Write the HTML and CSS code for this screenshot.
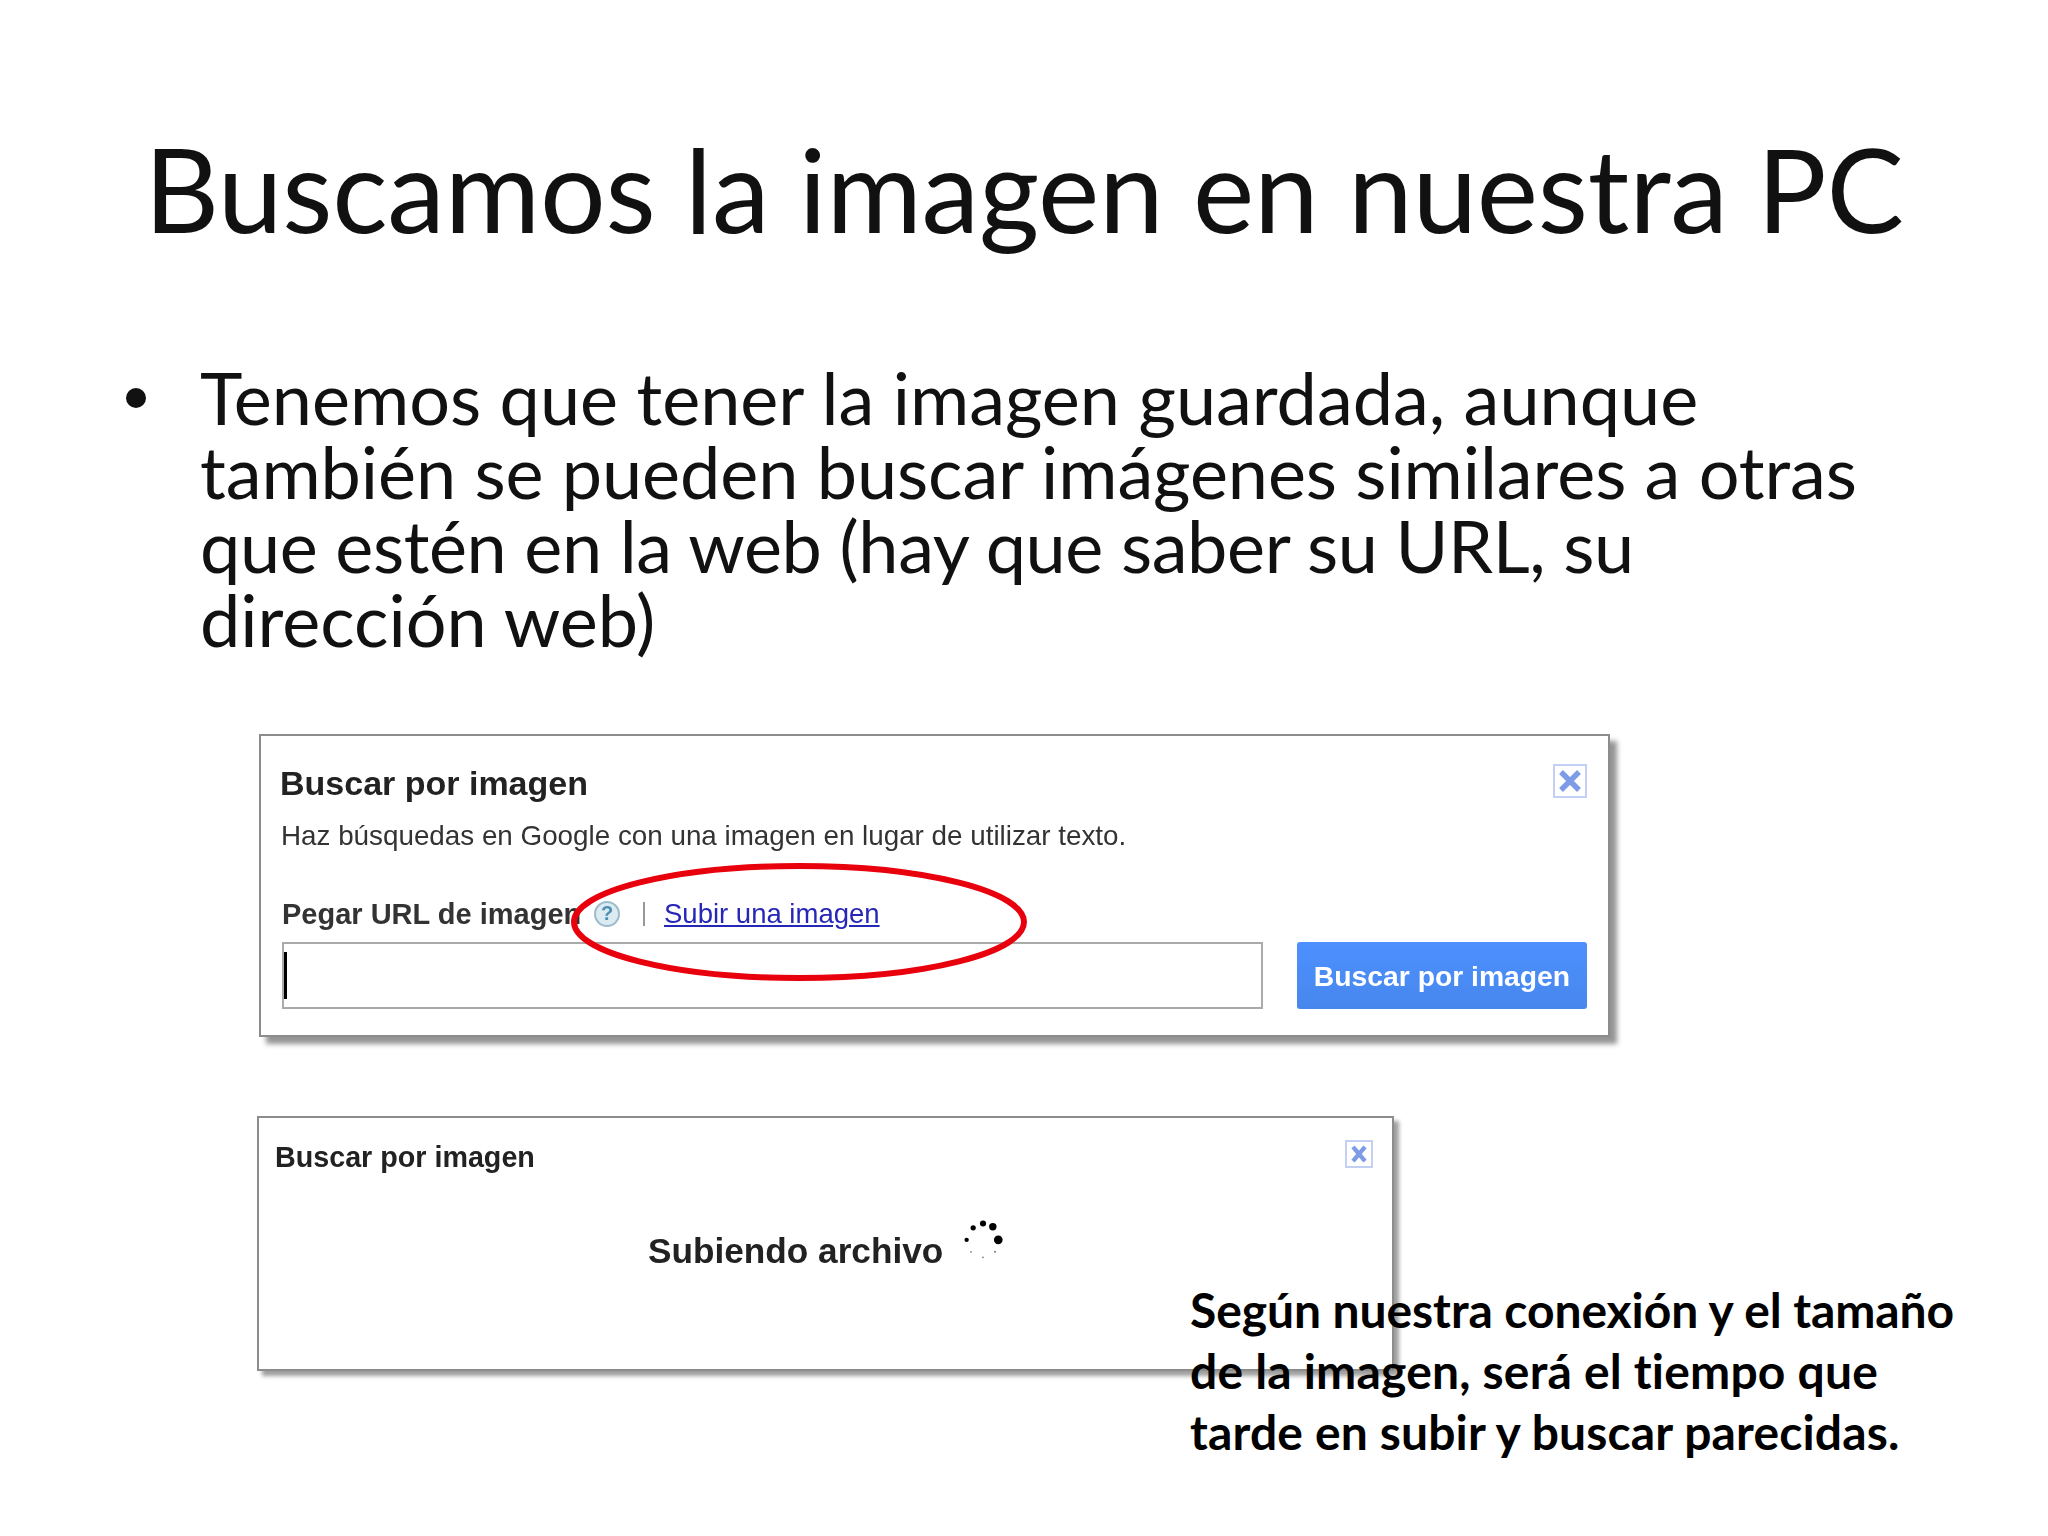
FILE: index.html
```html
<!DOCTYPE html>
<html lang="es">
<head>
<meta charset="utf-8">
<title>Buscamos la imagen en nuestra PC</title>
<link rel="stylesheet" href="styles.css">
</head>
<body>
<main class="slide">
  <h1 class="title">Buscamos la imagen en nuestra PC</h1>
  <ul class="bullets">
    <li class="bullet"><span class="line">Tenemos que tener la imagen guardada, aunque</span><span class="line line-b">también se pueden buscar imágenes similares a otras</span><span class="line line-c">que estén en la web (hay que saber su URL, su</span><span class="line">dirección web)</span></li>
  </ul>
  <section class="dialog dialog-search">
    <header class="dialog-head">
      <h2 class="dialog-title">Buscar por imagen</h2>
      <span class="close close-lg"><svg viewBox="0 0 20 20" class="close-x"><path d="M4 4 16 16M16 4 4 16"/></svg></span>
    </header>
    <p class="dialog-sub">Haz búsquedas en Google con una imagen en lugar de utilizar texto.</p>
    <div class="url-row">
      <span class="url-label">Pegar URL de imagen</span>
      <svg class="help" viewBox="0 0 28 28"><circle cx="14" cy="14" r="12" class="help-ring"/><text x="14" y="20" class="help-mark">?</text></svg>
      <span class="sep"></span>
      <a class="upload-link">Subir una imagen</a>
    </div>
    <div class="search-row">
      <div class="url-input"><span class="caret"></span></div>
      <button class="search-btn">Buscar por imagen</button>
    </div>
    <svg class="oval" viewBox="0 0 456 118"><ellipse cx="228" cy="59" rx="225" ry="56"/></svg>
  </section>
  <section class="dialog dialog-upload">
    <header class="dialog-head">
      <h2 class="dialog-title-sm">Buscar por imagen</h2>
      <span class="close close-sm"><svg viewBox="0 0 20 20" class="close-x"><path d="M5 4 15 16M15 4 5 16"/></svg></span>
    </header>
    <div class="upload-status">
      <span class="upload-text">Subiendo archivo</span>
      <svg class="spinner" viewBox="0 0 44 44">
        <circle cx="22" cy="5" r="2.8"/><circle cx="31" cy="8" r="3.4"/><circle cx="36" cy="20" r="4"/>
        <circle cx="13" cy="9" r="2.4"/><circle cx="7" cy="20" r="2"/>
        <circle cx="11" cy="31" r=".8" class="faint"/><circle cx="22" cy="36" r=".8" class="faint"/><circle cx="33" cy="31" r=".9" class="faint"/>
      </svg>
    </div>
  </section>
  <p class="note"><span class="line note-a">Según nuestra conexión y el tamaño</span><span class="line note-b">de la imagen, será el tiempo que</span><span class="line note-c">tarde en subir y buscar parecidas.</span></p>
</main>
</body>
</html>
```
FILE: styles.css
```css
html, body { margin: 0; padding: 0; background: #fff; }
.slide {
  position: relative;
  width: 2048px;
  height: 1536px;
  overflow: hidden;
  font-family: "Lato", "Carlito", sans-serif;
  color: #111;
}
.line { display: block; }
.title {
  margin: 0;
  padding-top: 119px;
  height: 236px;
  box-sizing: border-box;
  text-align: center;
  font-size: 116px;
  line-height: 140px;
  font-weight: 400;
  letter-spacing: -.25px;
}
.bullets {
  list-style: none;
  margin: 0;
  padding: 124px 0 0 200px;
}
.bullet {
  position: relative;
  font-size: 72px;
  line-height: 74px;
  white-space: nowrap;
}
.line-b { letter-spacing: -.08px; }
.line-c { letter-spacing: -.4px; }
.bullet::before {
  content: "";
  position: absolute;
  left: -74px;
  top: 28px;
  width: 20px;
  height: 20px;
  border-radius: 50%;
  background: #111;
}
.dialog {
  position: relative;
  box-sizing: border-box;
  background: #fff;
  border: 2px solid #8c8c8c;
  font-family: "Liberation Sans", Arial, sans-serif;
  color: #222;
  filter: blur(.5px);
}
.dialog-search {
  width: 1351px;
  height: 303px;
  margin: 78px 0 0 259px;
  padding: 27px 21px 0 19px;
  box-shadow: 7px 7px 5px rgba(0,0,0,.42);
}
.dialog-upload {
  width: 1137px;
  height: 255px;
  margin: 79px 0 0 257px;
  padding: 22px 19px 0 16px;
  box-shadow: 5px 5px 4px rgba(0,0,0,.38);
}
.dialog-head {
  display: flex;
  justify-content: space-between;
  align-items: flex-start;
}
.dialog-title {
  margin: 0;
  font-size: 34px;
  line-height: 40px;
  font-weight: 700;
  color: #222;
}
.dialog-title-sm {
  margin: 0;
  font-size: 28.7px;
  line-height: 34px;
  font-weight: 700;
  color: #222;
}
.close {
  box-sizing: border-box;
  display: flex;
  border: 2px solid #c3d0f3;
  background: #fff;
}
.close-lg { width: 34px; height: 34px; margin-top: 1px; }
.close-sm { width: 28px; height: 28px; }
.close-x { width: 100%; height: 100%; }
.close-x path { stroke: #7d9be6; stroke-width: 3.6; fill: none; }
.dialog-sub {
  margin: 16px 0 0 1px;
  font-size: 27.8px;
  line-height: 34px;
  color: #333;
}
.url-row {
  display: flex;
  align-items: center;
  height: 40px;
  margin: 41px 0 0 2px;
}
.url-label {
  font-size: 29px;
  font-weight: 700;
  color: #333;
  width: 310px;
  white-space: nowrap;
}
.help { width: 28px; height: 28px; margin-left: 1px; }
.help-ring { fill: #dceaf2; stroke: #9dbccb; stroke-width: 2; }
.help-mark { font-size: 20px; font-weight: 700; fill: #4d8fb5; text-anchor: middle; font-family: "Liberation Sans", sans-serif; }
.sep { width: 2px; height: 24px; background: #999; margin: 0 19px 0 22px; }
.upload-link {
  font-size: 27.5px;
  color: #2626b8;
  text-decoration: underline;
}
.search-row {
  display: flex;
  justify-content: space-between;
  margin: 8px 0 0 2px;
}
.url-input {
  box-sizing: border-box;
  width: 981px;
  height: 67px;
  border: 2px solid #aaa;
  background: #fff;
  padding: 8px 0 0 0;
}
.caret { display: block; width: 3px; height: 47px; background: #000; }
.search-btn {
  width: 290px;
  height: 67px;
  border: 0;
  border-radius: 3px;
  background: linear-gradient(#4d90fe, #4787ed);
  color: #fff;
  font-family: "Liberation Sans", Arial, sans-serif;
  font-size: 28.3px;
  font-weight: 700;
  padding: 2px 0 0;
}
.upload-status {
  display: flex;
  align-items: center;
  margin: 55px 0 0 373px;
}
.upload-text {
  font-size: 35.2px;
  line-height: 44px;
  font-weight: 700;
  color: #222;
}
.spinner {
  width: 48px;
  height: 48px;
  margin: -18px 0 0 16px;
}
.spinner circle { fill: #000; }
.spinner .faint { fill: #777; }
.oval {
  position: absolute;
  left: 310px;
  top: 127px;
  width: 456px;
  height: 118px;
  overflow: visible;
}
.oval ellipse { fill: none; stroke: #e8000d; stroke-width: 6; }
.note {
  position: absolute;
  left: 1190px;
  top: 1279px;
  margin: 0;
  font-size: 48px;
  line-height: 61px;
  font-weight: 700;
  color: #000;
  white-space: nowrap;
}
.note-a { letter-spacing: -.08px; }
.note-b { letter-spacing: .2px; }
.note-c { letter-spacing: .15px; }
```
